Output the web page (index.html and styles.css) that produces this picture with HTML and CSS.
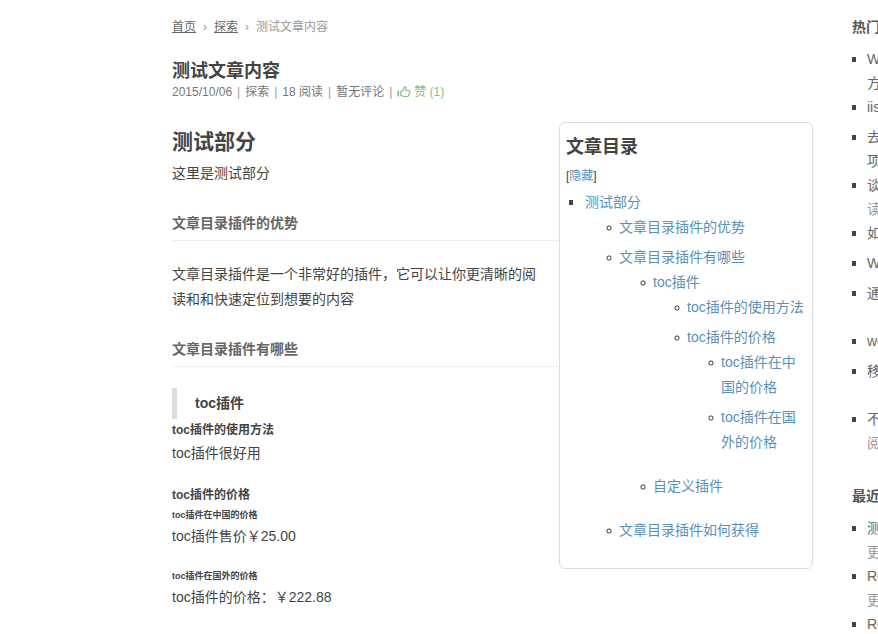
FILE: index.html
```
<!DOCTYPE html>
<html lang="zh-CN">
<head>
    <meta charset="UTF-8">
    <meta name="viewport" content="width=device-width, initial-scale=1.0">
    <title>测试文章内容</title>
    <link rel="stylesheet" href="styles.css">
</head>
<body>
    <div class="page">
        <main class="article">
            <nav class="breadcrumb">
                <a href="#home">首页</a>
                <span>›</span>
                <a href="#explore">探索</a>
                <span>›</span>
                <span>测试文章内容</span>
            </nav>
            <header>
                <h1 class="title">测试文章内容</h1>
                <div class="meta">
                    <span>2015/10/06</span>
                    <span class="sep">|</span>
                    <a href="#explore">探索</a>
                    <span class="sep">|</span>
                    <span>18 阅读</span>
                    <span class="sep">|</span>
                    <a href="#comments">暂无评论</a>
                    <span class="sep">|</span>
                    <a class="like" href="#like">
                        <svg width="14" height="13" viewBox="0 0 14 13" fill="none" stroke="currentColor" stroke-linejoin="round">
                            <path d="M1.2 5v5.5" stroke-width="1.6"/>
                            <path d="M3.8 5.4 6.2 4 7.4 1C8.6.6 9.5 1.5 9.1 2.8L8.6 4.5h3.2c1.1 0 1.4 1 .9 1.6.3.6.1 1.2-.4 1.5.1.7-.1 1.2-.6 1.5-.1 1-.6 1.4-1.5 1.4H6.8L3.8 9.4z" stroke-width="1.2"/>
                        </svg>
                        赞 (1)
                    </a>
                </div>
            </header>
            <div class="content">
                <aside class="toc">
                    <h3 class="toc-title">文章目录</h3>
                    <div class="toc-toggle">[<a href="#toc">隐藏</a>]</div>
                    <ul class="toc-list">
                        <li><a href="#s1">测试部分</a>
                            <ul>
                                <li><a href="#s1-1">文章目录插件的优势</a></li>
                                <li><a href="#s1-2">文章目录插件有哪些</a>
                                    <ul>
                                        <li><a href="#s1-2-1">toc插件</a>
                                            <ul>
                                                <li><a href="#usage">toc插件的使用方法</a></li>
                                                <li><a href="#price">toc插件的价格</a>
                                                    <ul>
                                                        <li><a href="#price-cn">toc插件在中国的价格</a></li>
                                                        <li><a href="#price-abroad">toc插件在国外的价格</a></li>
                                                    </ul>
                                                </li>
                                            </ul>
                                        </li>
                                        <li><a href="#custom">自定义插件</a></li>
                                    </ul>
                                </li>
                                <li><a href="#get">文章目录插件如何获得</a></li>
                            </ul>
                        </li>
                    </ul>
                </aside>
                <h1 id="s1">测试部分</h1>
                <p>这里是测试部分</p>
                <h2 id="s1-1">文章目录插件的优势</h2>
                <p>文章目录插件是一个非常好的插件，它可以让你更清晰的阅读和和快速定位到想要的内容</p>
                <h2 id="s1-2">文章目录插件有哪些</h2>
                <h3 id="s1-2-1">toc插件</h3>
                <h4 id="usage">toc插件的使用方法</h4>
                <p>toc插件很好用</p>
                <h4 id="price">toc插件的价格</h4>
                <h5 id="price-cn">toc插件在中国的价格</h5>
                <p>toc插件售价￥25.00</p>
                <h5 id="price-abroad">toc插件在国外的价格</h5>
                <p>toc插件的价格：￥222.88</p>
            </div>
        </main>
        <aside class="sidebar">
            <h3>热门</h3>
            <ul>
                <li><a href="#p1">W<br>方</a></li>
                <li><a href="#p2">iis</a></li>
                <li><a href="#p3">去<br>项</a></li>
                <li><a href="#p4">谈</a><br><span>读</span></li>
                <li><a href="#p5">如</a></li>
                <li><a href="#p6">W</a></li>
                <li><a href="#p7">通</a><br>&nbsp;</li>
                <li><a href="#p8">wo</a></li>
                <li><a href="#p9">移</a><br>&nbsp;</li>
                <li><a href="#p10">不</a><br><span>阅</span></li>
            </ul>
            <h3>最近</h3>
            <ul>
                <li><a href="#r1">测</a><br><span>更</span></li>
                <li><a href="#r2">Re</a><br><span>更</span></li>
                <li><a href="#r3">Re</a></li>
            </ul>
        </aside>
    </div>
</body>
</html>
```

FILE: styles.css
```
body {
    margin: 0;
    overflow-x: hidden;
    background-color: #fff;
    color: #444;
    font-family: "Liberation Sans", "Noto Sans CJK SC", sans-serif;
    font-size: 14px;
    line-height: 25px;
}
h1, h2, h3, h4, h5, p, ul {
    margin: 0;
    padding: 0;
}
a {
    color: inherit;
    text-decoration: none;
}
.page {
    display: flex;
    gap: 39px;
    padding: 15px 0 0 172px;
}
.article {
    flex: 1;
    min-width: 641px;
}
.breadcrumb {
    display: flex;
    gap: 7px;
    font-size: 12px;
    line-height: 24px;
    color: #999;
}
.breadcrumb a {
    color: #666;
    text-decoration: underline;
}
.title {
    margin-top: 20px;
    font-size: 18px;
    line-height: 24px;
}
.meta {
    display: flex;
    gap: 5px;
    font-size: 12px;
    line-height: 18px;
    color: #777;
}
.meta .sep {
    color: #999;
}
.meta .like {
    display: flex;
    align-items: center;
    gap: 3px;
    color: #86c286;
}

/* article body */
.content {
    margin-top: 21px;
}
.content > h1 {
    font-size: 21px;
    line-height: 39px;
}
.content > p {
    margin-bottom: 18px;
}
.content > p:last-child {
    margin-bottom: 0;
}
.content > h2 {
    margin: 25px 0 21px;
    padding-bottom: 4px;
    border-bottom: 1px solid #eee;
    font-size: 14px;
    color: #666;
}
.content > h3 {
    padding-left: 18px;
    border-left: 5px solid #ddd;
    font-size: 14px;
    line-height: 31px;
}
.content > h4 {
    font-size: 12px;
    line-height: 22px;
}
.content > h5 {
    font-size: 9px;
    line-height: 18px;
}

/* table of contents */
.toc {
    position: relative;
    float: right;
    box-sizing: border-box;
    width: 254px;
    margin-left: 20px;
    padding: 9px 6px 6px;
    border: 1px solid #ddd;
    border-radius: 6px;
    background-color: #fff;
}
.toc-title {
    font-size: 18px;
    line-height: 30px;
}
.toc-toggle {
    font-size: 12px;
    line-height: 28px;
}
.toc a {
    color: #5a8fb8;
}
.toc ul ul {
    margin: 0 0 19px 20px;
}
.toc li {
    margin-bottom: 5px;
    padding-left: 14px;
    background: radial-gradient(circle, transparent 1px, #444 2px, transparent 3px) no-repeat 1px 10px / 6px 6px;
    list-style: none;
}

.toc .toc-list > li,
.sidebar li {
    padding-left: 19px;
    background: linear-gradient(#444, #444) no-repeat 3px 10px / 4px 5px;
    list-style: none;
}

/* sidebar */
.sidebar {
    flex: none;
    width: 240px;
}
.sidebar h3 {
    margin-bottom: 8px;
    font-size: 14px;
    line-height: 24px;
    color: #555;
}
.sidebar ul {
    margin-bottom: 29px;
}
.sidebar ul:last-child {
    margin-bottom: 0;
}
.sidebar li {
    min-height: 30px;
    padding-left: 15px;
    background-position: 0 10px;
    line-height: 24px;
    color: #666;
}
.sidebar li span {
    color: #999;
}
```
